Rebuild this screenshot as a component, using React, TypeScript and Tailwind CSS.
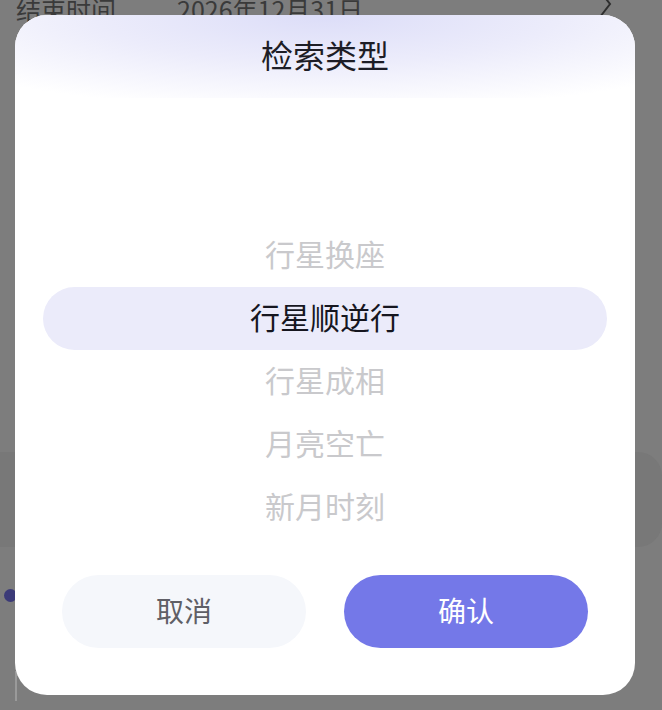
import React from "react";

const items = ["", "", "行星换座", "行星顺逆行", "行星成相", "月亮空亡", "新月时刻"];
const selected = 3;

const font = {
  fontFamily: '"Noto Sans CJK SC", "Noto Sans", sans-serif',
};

const App = () => {
  return (
    <div
      className="relative h-[710px] w-[662px] overflow-hidden bg-[#7d7d7d]"
      style={font}
    >
      {/* page behind the dimmed overlay */}
      <div className="flex flex-col">
        <div className="-mt-[8px] flex h-[34px] items-center pl-[16px] pr-[50px] text-[25px] leading-[34px] text-[#3a3a3a]">
          <span className="w-[161px]">结束时间</span>
          <span className="flex-1">2026年12月31日</span>
          <svg width="14" height="28" viewBox="0 0 14 28" className="-mt-[8px]">
            <path d="M2 0 L12 13 L2 26" fill="none" stroke="#2e2e2e" strokeWidth="2" />
          </svg>
        </div>
        <div className="mt-[426px] h-[95px] rounded-r-[24px] bg-[#787878]"></div>
        <div className="mt-[42px] flex h-[12px] items-center">
          <div className="ml-[4px] h-[13px] w-[13px] rounded-full bg-[#3b3a78]"></div>
        </div>
        <div className="ml-[15px] mt-[70px] h-[30px] w-[2px] bg-[#9a9a9a]"></div>
      </div>

      {/* dialog */}
      <div className="absolute left-[15px] top-[15px] flex h-[680px] w-[620px] flex-col overflow-hidden rounded-[32px] bg-white">
        <div className="flex h-[83px] justify-center bg-[radial-gradient(ellipse_75%_115%_at_50%_0%,#dcddf8_0%,#ececfb_50%,#ffffff_100%)] pt-[20px]">
          <span className="text-[32px] font-normal leading-[38px] text-[#1d1d26]">
            检索类型
          </span>
        </div>
        <div className="flex flex-col px-[28px]">
          {items.map((label, i) => (
            <div
              key={i}
              className={
                i === selected
                  ? "flex h-[63px] items-center justify-center rounded-full bg-[#ebebfa] pb-[5px] text-[30px] text-[#16161f]"
                  : "flex h-[63px] items-center justify-center pb-[5px] text-[30px] text-[#c9c9cc]"
              }
            >
              {label}
            </div>
          ))}
        </div>
        <div className="mt-[36px] flex gap-[38px] px-[47px]">
          <button className="flex h-[73px] flex-1 items-center justify-center rounded-full bg-[#f5f7fb] pb-[4px] text-[28px] text-[#5f5f66]">
            取消
          </button>
          <button className="flex h-[73px] flex-1 items-center justify-center rounded-full bg-[#7478e8] pb-[4px] text-[28px] text-white">
            确认
          </button>
        </div>
      </div>
    </div>
  );
};

export default App;
